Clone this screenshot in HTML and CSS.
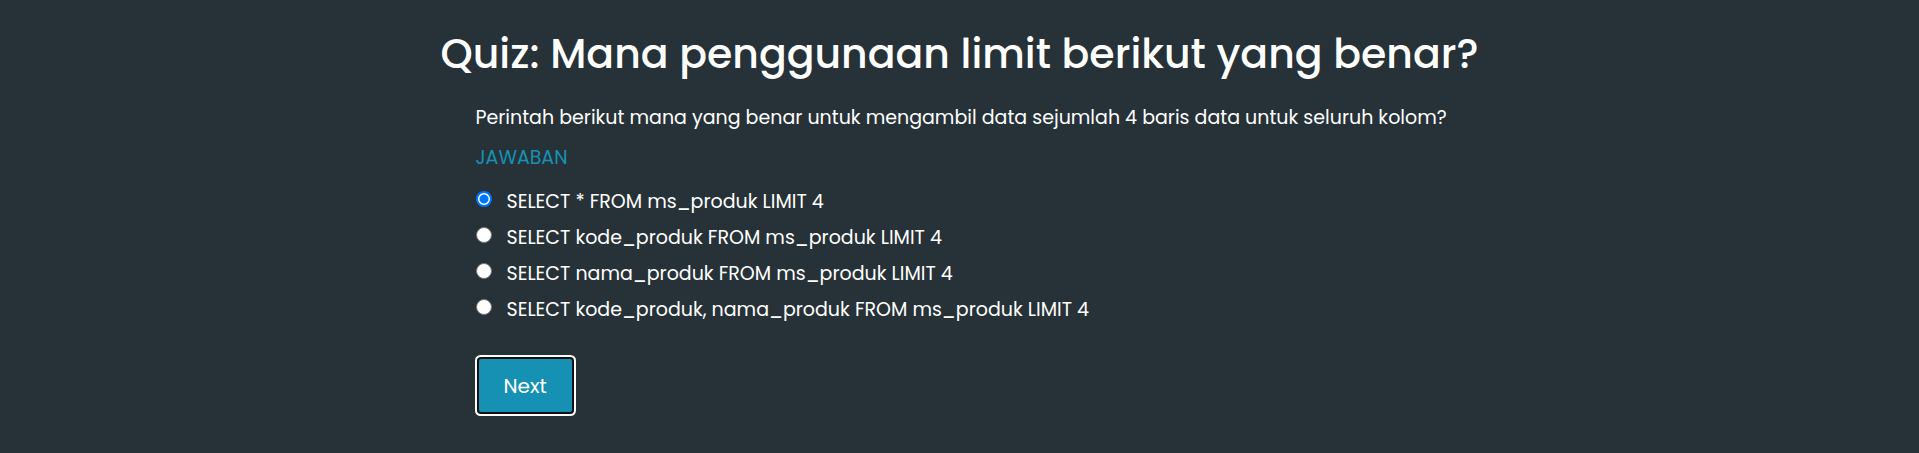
FILE: index.html
```
<!DOCTYPE html>
<html lang="id">
<head>
<meta charset="utf-8">
<meta name="viewport" content="width=device-width, initial-scale=1">
<title>Quiz: Mana penggunaan limit berikut yang benar?</title>
<link rel="stylesheet" href="styles.css">
</head>
<body>
<main class="quiz">
  <h1 class="quiz-title">Quiz: Mana penggunaan limit berikut yang benar?</h1>
  <form class="quiz-form">
    <p class="question">Perintah berikut mana yang benar untuk mengambil data sejumlah 4 baris data untuk seluruh kolom?</p>
    <fieldset class="answers">
      <legend class="answers-title">JAWABAN</legend>
      <label class="answer"><input class="answer-radio" type="radio" name="answer" checked><span>SELECT * FROM ms_produk LIMIT 4</span></label>
      <label class="answer"><input class="answer-radio" type="radio" name="answer"><span>SELECT kode_produk FROM ms_produk LIMIT 4</span></label>
      <label class="answer"><input class="answer-radio" type="radio" name="answer"><span>SELECT nama_produk FROM ms_produk LIMIT 4</span></label>
      <label class="answer"><input class="answer-radio" type="radio" name="answer"><span>SELECT kode_produk, nama_produk FROM ms_produk LIMIT 4</span></label>
    </fieldset>
    <button class="next" type="button">Next</button>
  </form>
</main>
</body>
</html>
```
FILE: styles.css
```
* {
  box-sizing: border-box;
}

body {
  margin: 0;
  background: #263238;
  color: #fff;
  font-family: Poppins, Inter, sans-serif;
  font-size: 19px;
  line-height: 30px;
}

.quiz {
  padding: 24px 16px 32px;
}

.quiz-title {
  margin: 0 0 19px;
  font-size: 41px;
  font-weight: 500;
  line-height: 60px;
  text-align: center;
}

.quiz-form {
  max-width: 980px;
  margin: 0 auto;
  padding-left: 6px;
}

.question {
  margin: 0 0 10px;
}

.answers {
  margin: 0;
  padding: 0;
  border: 0;
}

.answers-title {
  margin-bottom: 14px;
  padding: 0;
  color: #1791b3;
}

.answer {
  display: flex;
  gap: 15px;
  margin-bottom: 6px;
}

.answer-radio {
  appearance: none;
  flex: none;
  width: 16px;
  height: 16px;
  margin: 4px 0 0;
  border: 1px solid #767676;
  border-radius: 50%;
  background: #fff;
}

.answer-radio:checked {
  border: 2px solid #0075ff;
  background: radial-gradient(circle, #0075ff 4px, #fff 5px);
}

.next {
  margin: 28px 0 0 3px;
  padding: 12px 25px 11px;
  border: 0;
  border-radius: 2px;
  background: #1791b3;
  box-shadow: 0 0 0 2px #101010, 0 0 0 4px #fff;
  color: #fff;
  font: inherit;
  font-size: 20px;
}
```
